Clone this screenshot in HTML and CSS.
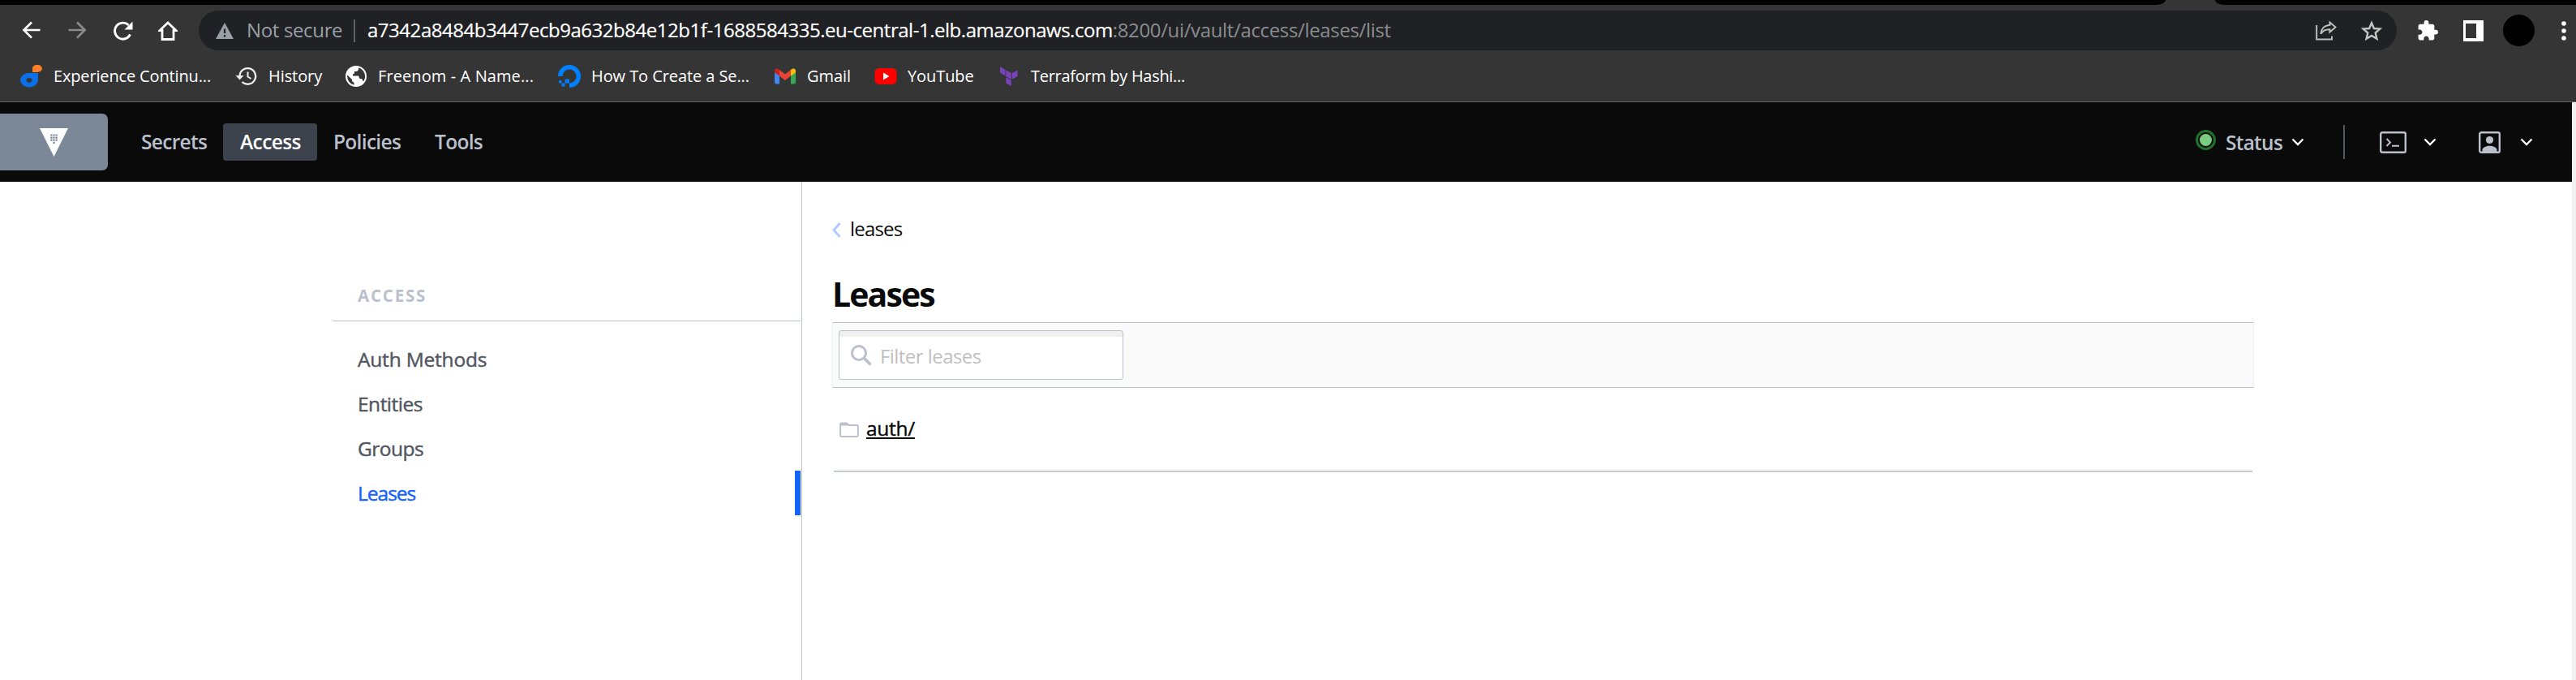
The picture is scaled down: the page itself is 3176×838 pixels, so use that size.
FILE: index.html
```html
<!DOCTYPE html>
<html lang="en">
<head>
<meta charset="utf-8">
<title>Vault</title>
<link rel="stylesheet" href="styles.css">
</head>
<body>
<div class="tabstrip"><div class="strip-left"></div><div class="strip-right"></div></div>
<header class="browser-bar">
  <svg class="ic-back" viewBox="0 0 24 24"><path d="M23 11.5H2M12 1.5L2 11.5L12 21.5" fill="none" stroke="#fff" stroke-width="2.8"/></svg>
  <svg class="ic-forward" viewBox="0 0 24 24"><path d="M1 11.5H22M12 1.5L22 11.5L12 21.5" fill="none" stroke="#8b8b8b" stroke-width="2.8"/></svg>
  <svg class="ic-reload" viewBox="0 0 25 24"><path d="M21.5 16.5A10 10 0 1 1 19.5 5" fill="none" stroke="#fff" stroke-width="2.9"/><path d="M24.5 0.5V10.5H14.5Z" fill="#fff"/></svg>
  <svg class="ic-home" viewBox="0 0 24 24"><path d="M12 2L22 11.5H19V22.5H5V11.5H2Z" fill="none" stroke="#fff" stroke-width="2.8"/></svg>
  <div class="omnibox">
    <svg class="ic-warn" viewBox="0 0 22 20"><path d="M11 0L22 20H0Z" fill="#9aa0a6"/><path d="M11 7.5V13M11 15V17.5" stroke="#202124" stroke-width="2.2"/></svg>
    <span class="t not-secure">Not secure</span>
    <i class="omni-sep"></i>
    <span class="url"><span class="t host">a7342a8484b3447ecb9a632b84e12b1f-1688584335.eu-central-1.elb.amazonaws.com</span><span class="t path">:8200/ui/vault/access/leases/list</span></span>
    <svg class="ic-share" viewBox="0 0 26 25"><path d="M1.2 6V23.6H20V19.5" fill="none" stroke="#bdbdbd" stroke-width="2"/><path d="M17.5 2.5L24.5 8.5L17.5 14.5V11.2C12 11 8.5 13 6.3 16.8C6.8 11 10.5 6.3 17.5 5.8Z" fill="none" stroke="#bdbdbd" stroke-width="2"/></svg>
    <svg class="ic-star" viewBox="0 0 26 26"><path d="M13 3.2L15.9 10L23.3 10.6L17.7 15.5L19.4 22.7L13 18.9L6.6 22.7L8.3 15.5L2.7 10.6L10.1 10Z" fill="none" stroke="#c4c4c4" stroke-width="2.4"/></svg>
  </div>
  <svg class="ic-puzzle" viewBox="1.5 1 21.5 21.5"><path d="M20.5 11H19V7c0-1.1-.9-2-2-2h-4V3.500a2.500 2.500 0 0 0-5 0V5H4c-1.100 0-2 .9-2 2v3.800h1.500c1.500 0 2.700 1.200 2.700 2.700s-1.200 2.700-2.700 2.700H2V20c0 1.100.9 2 2 2h3.800v-1.500c0-1.500 1.200-2.700 2.700-2.700s2.700 1.200 2.700 2.700V22H17c1.100 0 2-.9 2-2v-4h1.500a2.500 2.500 0 0 0 0-5z" fill="#fff"/></svg>
  <svg class="ic-panel" viewBox="0 0 25 26"><path fill-rule="evenodd" d="M0 0H25V26H0ZM3 4V22H16V4Z" fill="#fff"/></svg>
  <i class="avatar"></i>
  <svg class="ic-more" viewBox="0 0 6 24"><circle cx="3" cy="3" r="2.8" fill="#fff"/><circle cx="3" cy="12" r="2.8" fill="#fff"/><circle cx="3" cy="21" r="2.8" fill="#fff"/></svg>
</header>
<nav class="bookmarks">
  <a class="bm bm1"><svg class="bi" viewBox="0 0 28 28"><path d="M9 10H22V18.500A11 8.800 0 1 1 9 10Z" fill="#0b70e8"/><ellipse cx="11" cy="18.800" rx="3.500" ry="2.800" fill="#353535"/><path d="M15 9V5A6 4.600 0 1 1 21 9Z" fill="#ff7f2a"/></svg><span class="t">Experience Continu...</span></a>
  <a class="bm bm2"><svg class="bi" viewBox="0 0 28 28"><path d="M5.500 14A9.800 9.800 0 1 1 8.500 21" fill="none" stroke="#eee" stroke-width="2.300"/><path d="M0.500 13H10.500L5.500 18.500Z" fill="#eee"/><path d="M15.500 8.500V14.500L19.500 17" fill="none" stroke="#eee" stroke-width="2"/></svg><span class="t">History</span></a>
  <a class="bm bm3"><svg class="bi" viewBox="0 0 28 28"><circle cx="14" cy="14" r="13" fill="#fff"/><path d="M3.200 12.500L9 18V20L11.500 22V24.700A11 11 0 0 1 3.200 12.500ZM17 3.500V6L15 8H12V10.500L10 11.500V13.500H17L18.500 17H21L23 20.500A11 11 0 0 0 17 3.500Z" fill="#353535"/></svg><span class="t">Freenom - A Name...</span></a>
  <a class="bm bm4"><svg class="bi" viewBox="0 0 28 28"><path d="M14 28V22.500A8.500 8.500 0 1 0 5.500 14H0A14 14 0 1 1 14 28Z" fill="#0080ff"/><path d="M8.500 17.500H14V22.500H8.500ZM4.500 22.500H8.500V26.500H4.500ZM1 19H4.500V22.500H1Z" fill="#0080ff"/></svg><span class="t">How To Create a Se...</span></a>
  <a class="bm bm5"><svg class="bi" viewBox="0 0 28 28"><path d="M1 7V21.500A2 2 0 0 0 3 23.500H7V11Z" fill="#4285f4"/><path d="M27 7V21.500A2 2 0 0 1 25 23.500H21V11Z" fill="#34a853"/><path d="M7 6L14 11.500L21 6V13.500L14 19L7 13.500Z" fill="#ea4335"/><path d="M1 7.500C1 4 4.500 3.500 7 6V13.500L1 9.500Z" fill="#c5221f"/><path d="M27 7.500C27 4 23.500 3.500 21 6V13.500L27 9.500Z" fill="#fbbc04"/></svg><span class="t">Gmail</span></a>
  <a class="bm bm6"><svg class="bi" viewBox="0 0 28 28"><rect x="0.500" y="4" width="27" height="20" rx="5.500" fill="#f00"/><path d="M11 9.500L18.500 14L11 18.500Z" fill="#fff"/></svg><span class="t">YouTube</span></a>
  <a class="bm bm7"><svg class="bi" viewBox="0 0 28 28"><path d="M3 2L9.500 6V13.500L3 9.500ZM10.300 6.500L16.800 10.300V17.800L10.300 14ZM24.500 6.500L17.800 10.300V17.800L24.500 14ZM10.300 15.200L16.800 19V26L10.300 22.500Z" fill="#7b42bc"/></svg><span class="t">Terraform by Hashi...</span></a>
</nav>
<div class="viewport">
  <div class="app">
    <header class="navbar">
      <div class="logo"><svg viewBox="0 0 35 35"><path d="M0 0H35L17.500 35Z" fill="#fff"/><path d="M13.300 7.400h2.200v2.200h-2.200zM16.400 7.400h2.200v2.200h-2.200zM19.500 7.400h2.200v2.200h-2.200zM13.300 10.500h2.200v2.200h-2.200zM16.400 10.500h2.200v2.200h-2.200zM19.500 10.500h2.200v2.200h-2.200zM13.300 13.600h2.200v2.200h-2.200zM16.400 13.600h2.200v2.200h-2.200zM19.500 13.600h2.200v2.200h-2.200zM16.400 16.700h2.200v2.200h-2.200z" fill="#7c8797"/></svg></div>
      <a class="nav n-secrets"><span class="t">Secrets</span></a>
      <a class="nav active n-access"><span class="t">Access</span></a>
      <a class="nav n-policies"><span class="t">Policies</span></a>
      <a class="nav n-tools"><span class="t">Tools</span></a>
      <div class="nav-right">
        <svg class="ic-status" viewBox="0 0 25 25"><circle cx="12.500" cy="12.500" r="11" fill="none" stroke="#1e7125" stroke-width="3"/><circle cx="12.500" cy="12.500" r="7.500" fill="#7acc81"/></svg>
        <span class="t status">Status</span>
        <svg class="chev c1" viewBox="0 0 16 10"><path d="M1.500 1.500L8 8L14.500 1.500" fill="none" stroke="#fff" stroke-width="2.300"/></svg>
        <i class="nav-sep"></i>
        <svg class="ic-term" viewBox="0 0 33 27"><rect x="1.200" y="1.200" width="30.600" height="24.600" rx="2" fill="none" stroke="#bac1cc" stroke-width="2.400"/><path d="M8.500 9L13 13.500L8.500 18M15 17.800H24" fill="none" stroke="#bac1cc" stroke-width="1.900"/></svg>
        <svg class="chev c2" viewBox="0 0 16 10"><path d="M1.500 1.500L8 8L14.500 1.500" fill="none" stroke="#fff" stroke-width="2.300"/></svg>
        <svg class="ic-user" viewBox="0 0 27 27"><rect x="1.200" y="1.200" width="24.600" height="24.600" rx="2" fill="none" stroke="#bac1cc" stroke-width="2.400"/><circle cx="13.500" cy="10.500" r="4.600" fill="#bac1cc"/><path d="M4.500 25V22.500C6.500 16.300 20.500 16.300 22.500 22.500V25Z" fill="#bac1cc"/></svg>
        <svg class="chev c3" viewBox="0 0 16 10"><path d="M1.500 1.500L8 8L14.500 1.500" fill="none" stroke="#fff" stroke-width="2.300"/></svg>
      </div>
    </header>
    <div class="columns">
      <aside class="sidebar">
        <p class="side-label"><span class="t">ACCESS</span></p>
        <ul class="side-list">
          <li class="auth-methods"><span class="t">Auth Methods</span></li>
          <li><span class="t">Entities</span></li>
          <li><span class="t">Groups</span></li>
          <li class="current"><span class="t">Leases</span></li>
        </ul>
      </aside>
      <main class="content">
        <div class="crumb"><svg viewBox="0 0 11 19"><path d="M9.500 1L2 9.500L9.500 18" fill="none" stroke="#b0caff" stroke-width="2.800"/></svg><span class="t">leases</span></div>
        <h1><span class="t">Leases</span></h1>
        <div class="filterbar"><div class="filter"><svg viewBox="0 0 26 26"><circle cx="10" cy="10" r="8.500" fill="none" stroke="#bac1cc" stroke-width="3"/><path d="M16 16L24.500 24.500" stroke="#bac1cc" stroke-width="3.600"/></svg><span class="t">Filter leases</span></div></div>
        <div class="row"><svg viewBox="0 0 24 19"><path d="M2 1.500H9L11.500 4H21.500Q22.900 4 22.900 5.400V16.500Q22.900 17.900 21.500 17.900H2.500Q1.100 17.900 1.100 16.500V2.500Z" fill="none" stroke="#bac1cc" stroke-width="2"/><path d="M1 1H9L12 4.500H1Z" fill="#bac1cc"/></svg><span class="t">auth/</span></div>
      </main>
    </div>
  </div>
  <div class="scrollbar"></div>
</div>
</body>
</html>
```
FILE: styles.css
```css
*{box-sizing:border-box}
body{margin:0;width:3176px;height:838px;overflow:hidden;background:#fff;font-family:"Open Sans","Noto Sans",sans-serif;font-size:24.5px;color:#0a0a0a;display:flex;flex-direction:column}
svg{display:block;flex:none}
i{flex:none}
.t{white-space:nowrap;flex:none}

/* browser chrome */
.tabstrip{height:6px;flex:none;background:#353535;display:flex;justify-content:space-between}
.strip-left{width:2670px;background:#000;border-bottom-right-radius:12px 6px}
.strip-right{width:445px;background:#000;border-bottom-left-radius:12px 6px}
.browser-bar{height:64px;flex:none;background:#353535;display:flex;align-items:center;padding-bottom:1px}
.ic-back{width:24px;height:23px;margin-left:27px}
.ic-forward{width:24px;height:23px;margin-left:32px}
.ic-reload{width:25px;height:24px;margin-left:32px}
.ic-home{width:24px;height:24px;margin-left:31px}
.omnibox{width:2710px;height:49px;flex:none;border-radius:25px;background:#202124;margin-left:26px;display:flex;align-items:center;font-size:24px}
.ic-warn{width:22px;height:20px;margin-left:21px}
.not-secure{width:116px;margin:-2px 0 0 16px;color:#9aa0a6;letter-spacing:-.35px}
.omni-sep{width:2px;height:28px;background:#5f6368;margin-left:16px}
.url{width:1260px;margin:-2px 0 0 15px;color:#fff;display:flex}
.host{letter-spacing:-.47px;-webkit-text-stroke:.2px #fff}
.path{color:#8b8d90;letter-spacing:-.35px}
.ic-share{width:26px;height:25px;margin-left:auto}
.ic-star{width:26px;height:26px;margin:0 18px 0 30px}
.ic-puzzle{width:25px;height:25px;margin-left:26px}
.ic-panel{width:25px;height:26px;margin-left:31px}
.avatar{width:39px;height:39px;border-radius:50%;background:#000;margin-left:24px}
.ic-more{width:6px;height:24px;margin-left:33px}
.bookmarks{height:56px;flex:none;background:#353535;border-bottom:1px solid #606060;display:flex;padding:10px 0 17px 25px;color:#fff;font-size:20px;letter-spacing:-.08px}
.bm{display:flex;align-items:center;gap:13px;flex:none}
.bm .t{margin-top:-2px}
.bi{width:28px;height:28px}
.bm1{width:265px;letter-spacing:-.15px}
.bm2{width:135px}
.bm3{width:263px;letter-spacing:.1px}
.bm4{width:266px}
.bm5{width:124px}
.bm6{width:152px}
.bm7{letter-spacing:-.3px}

/* vault navigation */
.viewport{flex:1;display:flex;min-height:0}
.app{width:3171px;display:flex;flex-direction:column}
.scrollbar{flex:1;background:#f1f1f1}
.navbar{height:98px;flex:none;background:#0a0a0a;display:flex;align-items:center;color:#bac1cc;font-weight:600;letter-spacing:-.7px}
.logo{width:133px;height:70px;background:#7c8797;border-radius:0 7px 7px 0;display:flex;align-items:center;padding-left:49px;margin-right:21px}
.logo svg{width:35px;height:35px}
.nav{height:46px;display:flex;align-items:center;flex:none;padding-left:20px}
.nav .t{margin-top:-1px}
.n-secrets{width:121px}
.n-access{width:116px;padding-left:21px;letter-spacing:-.6px}
.n-policies{width:125px;padding-left:20px}
.active{background:#3d434d;color:#fff;border-radius:4px}
.nav-right{display:flex;align-items:center;margin-left:auto;padding-right:48px}
.ic-status{width:25px;height:25px;margin-bottom:6px}
.status{width:81px;margin-left:12px;letter-spacing:-.75px}
.chev{width:16px;height:10px}
.nav-sep{width:2px;height:42px;background:#525761;margin:0 43px 0 48px}
.ic-term{width:33px;height:27px}
.c2{margin:0 52px 0 21px}
.ic-user{width:27px;height:27px}
.c3{margin-left:24px}

/* page body */
.columns{flex:1;display:flex}
.sidebar{width:989px;flex:none;padding-left:410px;border-right:1px solid #bac1cc;padding-right:1px}
.side-label{height:172px;margin:0 0 19px;padding:127px 0 0 31px;border-bottom:1px solid #bac1cc;font-size:20.5px;line-height:27px;font-weight:700;letter-spacing:1.8px;color:#bac1cc}
.side-list{list-style:none;margin:0;padding:0;color:#525761;letter-spacing:-.5px;-webkit-text-stroke:.45px currentColor}
.side-list li{height:55px;padding-left:31px;line-height:55px}
.side-list .auth-methods{letter-spacing:-.2px}
.side-list .current{color:#1563ff;border-right:7px solid #1563ff;letter-spacing:-1px}
.content{width:1790px;padding:36px 0 0 37px}
.crumb{height:42px;display:flex;align-items:center;gap:11px;font-size:24px;letter-spacing:-.8px}
.crumb svg{width:11px;height:19px;margin-top:4px}
h1{margin:36px 0 10px;font-size:41px;line-height:49px;letter-spacing:-1.9px}
.filterbar{height:81px;background:#fafafa;border:1px solid #bac1cc;border-left-color:#ebeef2;border-right-color:#ebeef2;padding:9px 7px}
.filter{width:351px;height:61px;background:#fff;border:1px solid #bac1cc;border-radius:3px;box-shadow:inset 0 7px 1px #f0f0f0;display:flex;align-items:center;padding-left:14px;gap:10px;font-size:24px;letter-spacing:-.55px;color:#bfbfbf}
.filter svg{width:26px;height:26px}
.filter .t{margin-top:1px}
.row{height:103px;margin:0 2px;border-bottom:1px solid #bac1cc;box-shadow:0 1px 0 #ced3dd;display:flex;align-items:center;gap:9px;padding-left:7px;letter-spacing:-.3px}
.row svg{width:24px;height:19px;margin-top:1px}
.row .t{text-decoration:underline;text-decoration-thickness:2px;text-underline-offset:2px;margin-top:-3px;-webkit-text-stroke:.4px currentColor}
```
